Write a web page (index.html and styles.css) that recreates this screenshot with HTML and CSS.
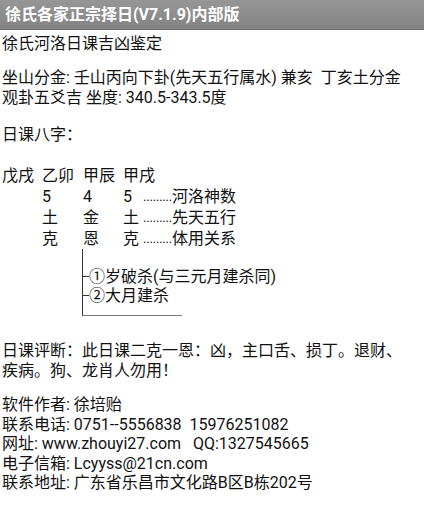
FILE: index.html
```html
<!DOCTYPE html>
<html lang="zh-CN">
<head>
<meta charset="utf-8">
<title>徐氏各家正宗择日</title>
<link rel="stylesheet" href="styles.css">
</head>
<body>
<header class="titlebar">徐氏各家正宗择日(V7.1.9)内部版</header>
<main class="content">
  <p class="line l-head">徐氏河洛日课吉凶鉴定</p>
  <p class="line l-zuo">坐山分金: 壬山丙向下卦(先天五行属水) 兼亥&nbsp;&nbsp;丁亥土分金</p>
  <p class="line">观卦五爻吉 坐度: 340.5-343.5度</p>
  <p class="line l-bazi">日课八字：</p>

  <div class="pillars">
    <span>戊戌</span><span>乙卯</span><span>甲辰</span><span>甲戌</span><span></span>
    <span></span><span>5</span><span>4</span><span>5</span><span class="note"><span class="dots">.........</span>河洛神数</span>
    <span></span><span>土</span><span>金</span><span>土</span><span class="note"><span class="dots">.........</span>先天五行</span>
    <span></span><span>克</span><span>恩</span><span>克</span><span class="note"><span class="dots">.........</span>体用关系</span>
  </div>

  <div class="tree">
    <div class="branch b1">①岁破杀(与三元月建杀同)</div>
    <div class="branch b2">②大月建杀</div>
  </div>

  <p class="line judge">日课评断：此日课二克一恩：凶，主口舌、损丁。退财、疾病。狗、龙肖人勿用！</p>

  <div class="contact">
    <p class="cline">软件作者: 徐培贻</p>
    <p class="cline">联系电话: 0751--5556838&nbsp;&nbsp;15976251082</p>
    <p class="cline">网址: www.zhouyi27.com&nbsp;&nbsp;&nbsp;QQ:1327545665</p>
    <p class="cline">电子信箱: Lcyyss@21cn.com</p>
    <p class="cline">联系地址: 广东省乐昌市文化路B区B栋202号</p>
  </div>
</main>
</body>
</html>
```

FILE: styles.css
```css
* { box-sizing: border-box; }
html, body {
  margin: 0;
  padding: 0;
  background: #ffffff;
}
body {
  width: 424px;
  height: 510px;
  overflow: hidden;
  font-family: Roboto, "Noto Sans CJK SC", sans-serif;
  font-size: 16px;
  color: #111111;
}
.titlebar {
  height: 30px;
  line-height: 29px;
  padding-left: 5px;
  background: linear-gradient(#969696, #8b8b8b 60%, #828282);
  border-bottom: 1px solid #6e6e6e;
  color: #ffffff;
  font-weight: bold;
  font-size: 16px;
  white-space: nowrap;
}
.content {
  padding: 0 8px 0 2px;
}
.line {
  margin: 0;
  line-height: 20px;
  white-space: nowrap;
}
.l-head { margin-top: 4px; }
.l-zuo { margin-top: 14px; }
.l-bazi { margin-top: 17px; }
.pillars {
  margin-top: 20px;
  display: grid;
  grid-template-columns: 40px 41px 40px 20px auto;
  grid-auto-rows: 21px;
  line-height: 21px;
  white-space: nowrap;
}
.note { display: flex; }
.dots {
  display: inline-block;
  width: 29px;
  overflow: hidden;
  font-size: 13px;
  letter-spacing: -0.2px;
  color: #111;
}
.tree {
  margin-left: 80px;
  margin-top: 0;
  height: 67px;
  width: 100px;
  border-left: 1px solid #333;
  border-bottom: 1px solid #777;
  padding-top: 18px;
}
.branch {
  position: relative;
  line-height: 19px;
  padding-left: 6px;
  white-space: nowrap;
}
.branch::before {
  content: "";
  position: absolute;
  left: 0;
  top: 9px;
  width: 6px;
  border-top: 1px solid #333;
}
.judge {
  margin-top: 25px;
  white-space: normal;
  width: 412px;
}
.contact { margin-top: 14px; }
.cline {
  margin: 0;
  line-height: 19.5px;
  white-space: nowrap;
}
```
